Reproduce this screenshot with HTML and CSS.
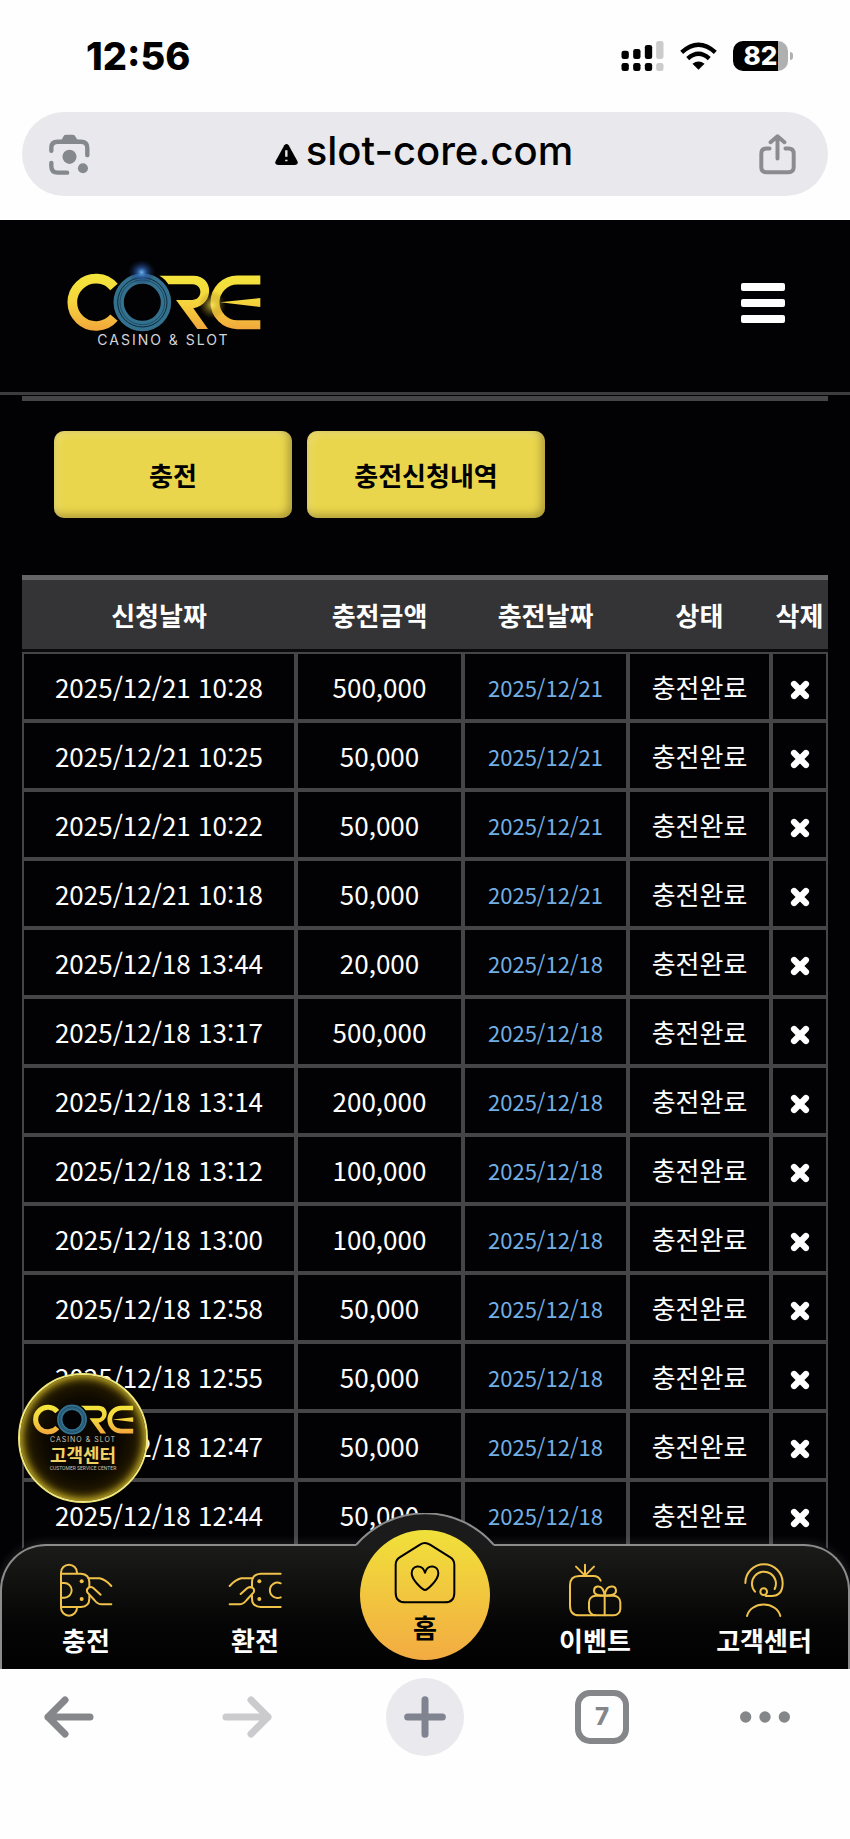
FILE: index.html
```html
<!DOCTYPE html>
<html lang="ko">

<head>
    <meta charset="UTF-8">
    <meta name="viewport" content="width=device-width, initial-scale=1.0">
    <title>CORE CASINO &amp; SLOT</title>
    <link rel="stylesheet" href="styles.css">
</head>

<body>
    <!-- Shared logo drawing -->
    <svg class="defs" aria-hidden="true">
        <defs>
            <linearGradient id="gold" gradientUnits="userSpaceOnUse" x1="0" y1="165" x2="0" y2="335">
                <stop offset="0" stop-color="#f3e53c" />
                <stop offset="0.5" stop-color="#f5d43c" />
                <stop offset="1" stop-color="#f2a63c" />
            </linearGradient>
            <radialGradient id="flare">
                <stop offset="0" stop-color="#6db8f0" />
                <stop offset="0.35" stop-color="#2f62b4" stop-opacity="0.7" />
                <stop offset="1" stop-color="#10204a" stop-opacity="0" />
            </radialGradient>
            <radialGradient id="spark">
                <stop offset="0" stop-color="#ffe95a" stop-opacity="0.8" />
                <stop offset="1" stop-color="#7a5a00" stop-opacity="0" />
            </radialGradient>
            <symbol id="logo" viewBox="198 120 585 219">
                <path d="M342 204A71 71 0 1 0 342 296" fill="none" stroke="url(#gold)" stroke-width="29" />
                <path d="M478 170H580C642 170 645 255 580 268L624 330H592L528 243H578C610 240 608 197 578 196H505Q496 180 478 170Z" fill="url(#gold)" />
                <path d="M781 183H712A67 67 0 0 0 712 317H781" fill="none" stroke="url(#gold)" stroke-width="27" />
                <path d="M660 250L781 237V264Z" fill="url(#gold)" />
                <circle cx="427" cy="250" r="89" fill="#020204" />
                <circle cx="427" cy="250" r="71" fill="none" stroke="#34718f" stroke-width="31" />
                <circle cx="427" cy="250" r="74" fill="none" stroke="#0b2a3b" stroke-width="3" />
                <circle cx="427" cy="250" r="67" fill="none" stroke="#1d4d66" stroke-width="3" />
            </symbol>
        </defs>
    </svg>

    <!-- Phone status bar -->
    <div class="status-bar">
        <span class="clock">12:56</span>
        <div class="status-icons">
            <svg class="signal" viewBox="0 0 126 90" aria-hidden="true">
                <rect x="0" y="29" width="22" height="25" rx="7" />
                <rect x="35" y="24" width="22" height="30" rx="7" />
                <rect x="70" y="12" width="22" height="42" rx="7" />
                <rect x="0" y="66" width="22" height="24" rx="7" />
                <rect x="35" y="66" width="22" height="24" rx="7" />
                <rect x="70" y="66" width="22" height="24" rx="7" />
                <rect class="off" x="104" y="0" width="22" height="54" rx="7" />
                <rect class="off" x="104" y="66" width="22" height="24" rx="7" />
            </svg>
            <svg class="wifi" viewBox="0 0 110 82" aria-hidden="true">
                <path d="M5 30Q55-15 105 30" fill="none" stroke="#000" stroke-width="13" />
                <path d="M23 49Q55 20 87 49" fill="none" stroke="#000" stroke-width="13" />
                <path d="M37 64Q55 50 73 64L55 82Z" />
            </svg>
            <span class="battery"><span class="battery-level">82</span></span>
        </div>
    </div>

    <!-- Browser address bar -->
    <div class="address-bar">
        <button class="icon-btn" aria-label="렌즈">
            <svg class="lens" viewBox="147 400 122 122" fill="none" stroke="#85888c" stroke-width="13" stroke-linecap="round">
                <path d="M154 450V440Q154 423 173 423H242Q261 423 261 442V463M154 486V496Q154 515 173 515H201" />
                <path d="M184 418L192 404Q194 402 198 402H217Q221 402 223 404L232 418Z" fill="#85888c" stroke="none" />
                <circle cx="208" cy="468" r="21" fill="#85888c" stroke="none" />
                <circle cx="248" cy="502" r="15" fill="#85888c" stroke="none" />
            </svg>
        </button>
        <a class="url" href="#">
            <svg class="warn" viewBox="0 0 69 63" aria-hidden="true">
                <path d="M28 4Q35-4 41 4L67 51Q72 62 60 63H9Q-3 62 2 51Z" />
                <path d="M34 19V38M34 47V52" stroke="#e9e9ed" stroke-width="7" />
            </svg>
            <span>slot-core.com</span>
        </a>
        <button class="icon-btn" aria-label="공유">
            <svg class="share" viewBox="1000 400 116 124" fill="none" stroke="#8b8b90" stroke-width="12" stroke-linecap="round" stroke-linejoin="round">
                <path d="M1034 444H1025Q1009 444 1009 460V500Q1009 516 1025 516H1091Q1107 516 1107 500V460Q1107 444 1091 444H1082M1058 474V410M1037 425L1058 407L1079 425" />
            </svg>
        </button>
    </div>

    <!-- Site -->
    <div class="site">
        <header class="site-header">
            <a class="brand" href="#">
                <svg class="brand-mark" viewBox="198 120 585 219" role="img" aria-label="CORE">
                    <use href="#logo" x="198" y="120" width="585" height="219" />
                    <ellipse cx="425" cy="160" rx="42" ry="38" fill="url(#flare)" />
                    <circle cx="637" cy="258" r="42" fill="url(#spark)" />
                </svg>
                <span class="brand-sub">CASINO &amp; SLOT</span>
            </a>
            <button class="menu-btn" aria-label="메뉴">
                <span></span>
                <span></span>
                <span></span>
            </button>
        </header>

        <main>
            <div class="btn-container">
                <button class="btn">충전</button>
                <button class="btn">충전신청내역</button>
            </div>

            <table class="history">
                <colgroup>
                    <col>
                    <col class="col-amount">
                    <col class="col-date">
                    <col class="col-state">
                    <col class="col-delete">
                </colgroup>
                <thead>
                    <tr>
                        <th>신청날짜</th>
                        <th>충전금액</th>
                        <th>충전날짜</th>
                        <th>상태</th>
                        <th>삭제</th>
                    </tr>
                </thead>
                <tbody id="historyRows"></tbody>
            </table>
        </main>

        <!-- Customer service badge -->
        <a class="service-badge" href="#">
            <svg class="badge-mark" viewBox="198 160 585 179" role="img" aria-label="CORE">
                <use href="#logo" x="198" y="120" width="585" height="219" />
            </svg>
            <span class="badge-sub">CASINO &amp; SLOT</span>
            <span class="badge-title">고객센터</span>
            <span class="badge-note">CUSTOMER SERVICE CENTER</span>
        </a>

        <!-- Bottom menu -->
        <nav class="bottom-nav">
            <svg class="nav-bump" viewBox="0 0 138 36" aria-hidden="true">
                <path d="M0 32A91 91 0 0 1 138 32V36H0Z" fill="#1b1b1b" />
                <path d="M0 32A91 91 0 0 1 138 32" fill="none" stroke="#8c8c8c" stroke-width="2" />
            </svg>
            <a class="nav-item" href="#">
                <svg class="nav-icon" viewBox="175 188 160 162">
                    <path d="M180 217V322A24 24 0 0 0 228 322M180 217A24 24 0 0 1 228 217M180 220H240Q265 222 265 245V259M180 320H240Q265 318 265 295V286" />
                    <path d="M180 248H190A22 22 0 0 1 190 292H180M262 234H296C313 238 322 247 331 257M299 283L277 263C266 256 254 265 259 276L280 299Q290 312 302 312H331" />
                    <circle class="dot" cx="242" cy="243" r="6" />
                    <circle class="dot" cx="242" cy="296" r="6" />
                </svg>
                충전
            </a>
            <a class="nav-item" href="#">
                <svg class="nav-icon" viewBox="685 188 160 162">
                    <path d="M842 220H782Q756 222 756 245V259M842 320H782Q756 318 756 295V286M842 249A23 23 0 1 0 842 291" />
                    <path d="M758 234H724C707 238 698 247 689 257M722 281L742 263C754 256 766 265 761 276L740 299Q730 312 718 312H689" />
                    <circle class="dot" cx="778" cy="243" r="6" />
                    <circle class="dot" cx="778" cy="296" r="6" />
                </svg>
                환전
            </a>
            <a class="nav-home" href="#">
                <svg class="home-icon" viewBox="190 154 186 186">
                    <path d="M283 157Q275 157 268 162L207 200Q195 208 195 222V306Q195 335 225 335H342Q371 335 371 306V222Q371 208 359 200L298 162Q290 157 283 157Z" />
                    <path d="M283 298C277 298 243 269 243 248C243 223 275 219 283 246C291 219 323 223 323 248C323 269 289 298 283 298Z" />
                </svg>
                홈
            </a>
            <a class="nav-item" href="#">
                <svg class="nav-icon" viewBox="145 188 160 162">
                    <path d="M242 241Q236 227 220 227H178Q150 227 150 255V316Q150 345 178 345H226M195 226V193M195 226L168 199M195 226L222 199" />
                    <rect x="207" y="286" width="94" height="59" rx="20" />
                    <path d="M254 286V345M254 285C236 286 222 284 222 271C222 256 241 255 247 265Q253 274 254 285C272 286 288 284 288 271C288 256 268 255 261 265Q255 274 254 285" />
                </svg>
                이벤트
            </a>
            <a class="nav-item" href="#">
                <svg class="nav-icon" viewBox="656 188 160 162">
                    <path d="M680 248A56 56 0 0 1 792 248Q792 287 758 287H741M709 274A36 36 0 1 1 768 266" />
                    <circle cx="735" cy="274" r="10" />
                    <path d="M685 347A51 43 0 0 1 785 347" />
                </svg>
                고객센터
            </a>
        </nav>
    </div>

    <!-- Browser toolbar -->
    <div class="toolbar">
        <button class="icon-btn" aria-label="뒤로">
            <svg class="arrow" viewBox="0 0 150 126" fill="none" stroke="#85878b" stroke-width="21" stroke-linecap="round" stroke-linejoin="round">
                <path d="M63 12L12 63L63 114M12 63H138" />
            </svg>
        </button>
        <button class="icon-btn" aria-label="앞으로">
            <svg class="arrow" viewBox="0 0 150 126" fill="none" stroke="#cbcbcd" stroke-width="21" stroke-linecap="round" stroke-linejoin="round">
                <path d="M87 12L138 63L87 114M138 63H12" />
            </svg>
        </button>
        <button class="icon-btn new-tab" aria-label="새 탭">
            <svg class="plus" viewBox="0 0 126 126" fill="none" stroke="#808390" stroke-width="21" stroke-linecap="round">
                <path d="M63 11V115M11 63H115" />
            </svg>
        </button>
        <button class="icon-btn tabs">7</button>
        <button class="icon-btn" aria-label="더보기">
            <svg class="dots" viewBox="0 0 150 36" fill="#85868a">
                <circle cx="17" cy="18" r="17" />
                <circle cx="75" cy="18" r="17" />
                <circle cx="133" cy="18" r="17" />
            </svg>
        </button>
    </div>

    <script>
        // Deposit requests: requested at, amount
        const rows = [
            ['2025/12/21 10:28', '500,000'],
            ['2025/12/21 10:25', '50,000'],
            ['2025/12/21 10:22', '50,000'],
            ['2025/12/21 10:18', '50,000'],
            ['2025/12/18 13:44', '20,000'],
            ['2025/12/18 13:17', '500,000'],
            ['2025/12/18 13:14', '200,000'],
            ['2025/12/18 13:12', '100,000'],
            ['2025/12/18 13:00', '100,000'],
            ['2025/12/18 12:58', '50,000'],
            ['2025/12/18 12:55', '50,000'],
            ['2025/12/18 12:47', '50,000'],
            ['2025/12/18 12:44', '50,000']
        ];

        document.getElementById('historyRows').innerHTML = rows.map(([time, amount]) => `
            <tr>
                <td>${time}</td>
                <td>${amount}</td>
                <td><span class="paid-date">${time.split(' ')[0]}</span></td>
                <td>충전완료</td>
                <td>
                    <button class="delete-btn" aria-label="삭제">
                        <svg viewBox="0 0 54 54"><path d="M11 11L43 43M43 11L11 43" /></svg>
                    </button>
                </td>
            </tr>`).join('');
    </script>
</body>

</html>
```
FILE: styles.css
```css
/* Basic reset */
* {
    margin: 0;
    padding: 0;
    box-sizing: border-box;
}

body {
    font-family: 'Noto Sans CJK KR', sans-serif;
    font-size: 26px;
    background-color: #fefefe;
    color: #fff;
    display: flex;
    flex-direction: column;
    min-height: 100vh;
}

a {
    color: inherit;
    text-decoration: none;
}

button {
    font: inherit;
    border: none;
    background: none;
    cursor: pointer;
}

svg {
    display: block;
}

.defs {
    position: absolute;
    width: 0;
    height: 0;
}

/* Status bar */
.status-bar {
    display: flex;
    align-items: center;
    justify-content: space-between;
    height: 112px;
    padding: 0 62px 0 86px;
    font-family: Inter, sans-serif;
    color: #000;
}

.clock {
    font-size: 38px;
    font-weight: 800;
}

.status-icons {
    display: flex;
    align-items: center;
    gap: 16px;
}

.signal {
    width: 43px;
    height: 30px;
}

.signal .off {
    fill: #cbcbcb;
}

.wifi {
    width: 37px;
    height: 28px;
}

.battery {
    position: relative;
    width: 55px;
    height: 30px;
    border-radius: 10px;
    background: linear-gradient(to right, #000 82%, #b0b0b0 82%);
}

.battery::after {
    content: "";
    position: absolute;
    left: 57px;
    top: 11px;
    width: 3px;
    height: 8px;
    border-radius: 0 4px 4px 0;
    background-color: #b0b0b0;
}

.battery-level {
    display: block;
    font-size: 26px;
    font-weight: 800;
    line-height: 30px;
    text-align: center;
    color: #fff;
}

/* Address bar */
.address-bar {
    display: flex;
    align-items: center;
    justify-content: space-between;
    height: 84px;
    margin: 0 22px 24px;
    padding: 0 31px 0 27px;
    border-radius: 42px;
    background-color: #e9e9ed;
}

.icon-btn {
    display: flex;
    align-items: center;
    justify-content: center;
}

.lens {
    width: 41px;
    height: 41px;
}

.share {
    width: 39px;
    height: 41px;
}

.url {
    display: flex;
    align-items: baseline;
    gap: 8px;
    padding-bottom: 6px;
    font-family: Inter, sans-serif;
    font-size: 40px;
    font-weight: 500;
    line-height: 48px;
    color: #000;
}

.warn {
    width: 23px;
    height: 21px;
}

/* Site */
.site {
    position: relative;
    padding-bottom: 120px;
    background-color: #020204;
    overflow: hidden;
}

.site-header {
    display: flex;
    align-items: center;
    justify-content: space-between;
    height: 175px;
    padding: 0 65px 7px 66px;
    border-bottom: 3px solid #3c3c3e;
}

.brand {
    display: flex;
    flex-direction: column;
    align-items: center;
}

.brand-mark {
    width: 195px;
    height: 73px;
}

.brand-sub {
    font-family: Inter, sans-serif;
    font-size: 14px;
    line-height: 15px;
    letter-spacing: 2px;
    color: #d5d5d8;
}

.menu-btn {
    display: flex;
    flex-direction: column;
    gap: 8px;
}

.menu-btn span {
    width: 44px;
    height: 8px;
    border-radius: 2px;
    background-color: #fff;
}

main {
    margin: 1px 22px 0;
    border-top: 5px solid #454547;
}

/* Button Styling */
.btn-container {
    display: flex;
    gap: 15px;
    padding: 30px 32px 57px;
}

.btn {
    width: 238px;
    height: 87px;
    border-radius: 10px;
    background-color: #e9d64c;
    box-shadow: inset -3px -3px 8px rgba(90, 70, 20, 0.45), inset 3px 3px 8px rgba(255, 255, 255, 0.25);
    font-weight: 700;
    color: #000;
}

/* Deposit history */
.history {
    width: 100%;
    table-layout: fixed;
    border-collapse: separate;
    border-spacing: 0;
    text-align: center;
    line-height: 38px;
}

.col-amount {
    width: 167px;
}

.col-date {
    width: 165px;
}

.col-state {
    width: 143px;
}

.col-delete {
    width: 57px;
}

.history th {
    height: 77px;
    border-top: 5px solid #656568;
    border-bottom: 3px solid #0a0a0b;
    background-color: #343336;
    font-weight: 700;
    white-space: nowrap;
}

.history td {
    height: 69px;
    border: 2px solid #454547;
}

.history tr:last-child td {
    border-bottom-color: transparent;
}

.paid-date {
    font-size: 22px;
    color: #72afe4;
}

.delete-btn {
    display: block;
    margin: 6px auto 0;
}

.delete-btn svg {
    width: 20px;
    height: 20px;
    fill: none;
    stroke: #fff;
    stroke-width: 17;
    stroke-linecap: round;
}

/* Customer service badge */
.service-badge {
    position: absolute;
    left: 18px;
    bottom: 166px;
    display: flex;
    flex-direction: column;
    align-items: center;
    width: 130px;
    height: 130px;
    padding-top: 29px;
    border: 2px solid #efe67c;
    border-radius: 50%;
    background-color: #0b0700;
    box-shadow: inset 0 0 8px 2px #d8c02c, inset 0 0 26px 4px #4a3800;
    white-space: nowrap;
}

.badge-mark {
    width: 102px;
    height: 31px;
}

.badge-sub {
    font-family: Inter, sans-serif;
    font-size: 7px;
    line-height: 9px;
    letter-spacing: 1px;
    color: #c9c4b8;
}

.badge-title {
    font-size: 18px;
    font-weight: 700;
    line-height: 21px;
    color: #f0d264;
}

.badge-note {
    font-family: Roboto, sans-serif;
    font-size: 5px;
    line-height: 6px;
    color: #c9c4b8;
}

/* Bottom menu */
.bottom-nav {
    position: absolute;
    left: 0;
    right: 0;
    bottom: 0;
    display: grid;
    grid-template-columns: 168fr 170fr 170fr 170fr 168fr;
    height: 125px;
    border: 2px solid #8c8c8c;
    border-bottom: none;
    border-radius: 46px 46px 0 0;
    background: linear-gradient(#1b1b19, #050505 65%, #020202);
    box-shadow: 0 0 12px rgba(255, 255, 255, 0.15);
    font-weight: 700;
    line-height: 38px;
}

.nav-bump {
    position: absolute;
    left: 50%;
    top: -33px;
    width: 138px;
    height: 36px;
    transform: translateX(-50%);
}

.nav-item {
    display: flex;
    flex-direction: column;
    align-items: center;
    gap: 4px;
    padding-top: 17px;
}

.nav-icon {
    width: 54px;
    height: 54px;
    fill: none;
    stroke: #f0c24a;
    stroke-width: 6;
    stroke-linecap: round;
    stroke-linejoin: round;
}

.nav-icon .dot {
    fill: #f0c24a;
    stroke: none;
}

.nav-home {
    position: relative;
    display: flex;
    flex-direction: column;
    align-items: center;
    justify-self: center;
    gap: 4px;
    width: 130px;
    height: 130px;
    margin-top: -16px;
    padding-top: 12px;
    border-radius: 50%;
    background: linear-gradient(#f0e13a, #f3ab42);
    color: #000;
}

.home-icon {
    width: 62px;
    height: 62px;
    fill: none;
    stroke: #000;
    stroke-width: 6;
    stroke-linejoin: round;
}

/* Browser toolbar */
.toolbar {
    display: grid;
    grid-template-columns: 138fr 218fr 138fr 216fr 110fr;
    align-items: center;
    justify-items: center;
    height: 95px;
    padding-right: 30px;
}

.arrow {
    width: 50px;
    height: 42px;
}

.new-tab {
    width: 78px;
    height: 78px;
    border-radius: 50%;
    background-color: #e9e9ee;
}

.plus {
    width: 42px;
    height: 42px;
}

.tabs {
    width: 54px;
    height: 54px;
    border: 6px solid #85868a;
    border-radius: 15px;
    font-family: Inter, sans-serif;
    font-size: 24px;
    font-weight: 800;
    color: #85868a;
}

.dots {
    width: 50px;
    height: 12px;
}
```
